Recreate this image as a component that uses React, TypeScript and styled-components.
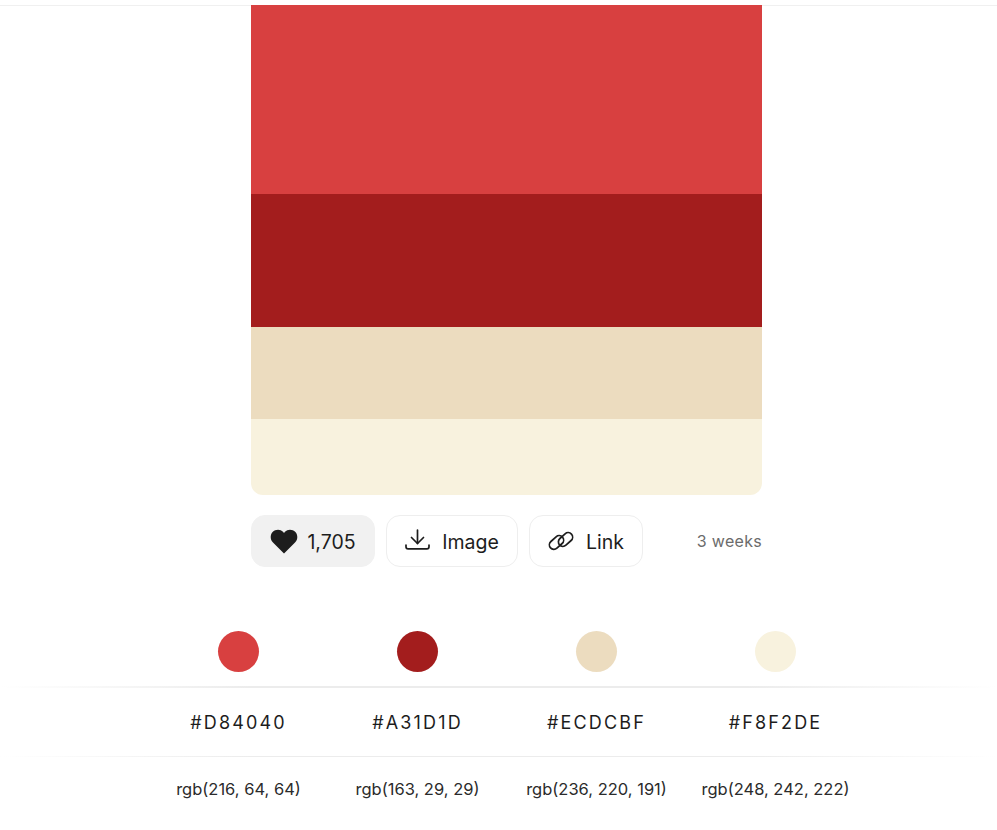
import styled, { createGlobalStyle } from 'styled-components';

const GlobalStyle = createGlobalStyle`
  html, body {
    margin: 0;
    padding: 0;
    background: #fff;
    font-family: Inter, "Liberation Sans", sans-serif;
    color: #1d1d1d;
  }
`;

const colors = [
  { hex: '#D84040', rgb: 'rgb(216, 64, 64)', height: 189 },
  { hex: '#A31D1D', rgb: 'rgb(163, 29, 29)', height: 133 },
  { hex: '#ECDCBF', rgb: 'rgb(236, 220, 191)', height: 92 },
  { hex: '#F8F2DE', rgb: 'rgb(248, 242, 222)', height: 76 },
];

const Page = styled.div`
  width: 997px;
  height: 830px;
  overflow: hidden;
  padding-top: 5px;
  box-sizing: border-box;
`;

const TopRule = styled.div`
  height: 1px;
  margin-bottom: -1px;
  background: #f0f0f0;
`;

const Main = styled.main`
  width: 511px;
  margin-left: 251px;
`;

const Palette = styled.div`
  display: flex;
  flex-direction: column;
  border-radius: 0 0 12px 12px;
  overflow: hidden;
`;

const Swatch = styled.div<{ $color: string; $height: number }>`
  height: ${(p) => p.$height}px;
  background: ${(p) => p.$color};
`;

const Actions = styled.div`
  display: flex;
  align-items: center;
  gap: 11px;
  margin-top: 20px;
`;

const ActionButton = styled.button<{ $liked?: boolean; $width: number }>`
  display: flex;
  align-items: center;
  justify-content: center;
  gap: ${(p) => (p.$liked ? 9 : 12)}px;
  width: ${(p) => p.$width}px;
  height: 52px;
  padding: 0;
  box-sizing: border-box;
  border: 1px solid ${(p) => (p.$liked ? '#f1f1f1' : '#eeeeee')};
  border-radius: 14px;
  background: ${(p) => (p.$liked ? '#f1f1f1' : '#fff')};
  color: #1d1d1d;
  font-family: inherit;
  font-size: 19.5px;
  line-height: 24px;
`;

const Label = styled.span`
  padding-top: 1px;
`;

const Age = styled.span`
  margin-left: auto;
  font-size: 16px;
  letter-spacing: 0.3px;
  color: #6b6b6b;
`;

const Table = styled.section`
  margin-top: 64px;
`;

const Row = styled.div<{ $height: number; $rule?: number; $paddingBottom?: number }>`
  display: grid;
  grid-template-columns: repeat(4, 179px);
  align-items: center;
  justify-items: center;
  height: ${(p) => p.$height}px;
  box-sizing: border-box;
  padding-left: 149px;
  padding-bottom: ${(p) => p.$paddingBottom ?? 0}px;
  position: relative;

  ${(p) =>
    p.$rule
      ? `&::after {
    content: '';
    position: absolute;
    left: 0;
    right: 0;
    bottom: 0;
    height: ${p.$rule}px;
    background: linear-gradient(90deg, #fff 0%, #ececec 25%, #ececec 75%, #fff 100%);
  }`
      : ''}
`;

const Dot = styled.div<{ $color: string }>`
  width: 41px;
  height: 41px;
  border-radius: 50%;
  background: ${(p) => p.$color};
`;

const Hex = styled.span`
  font-size: 18px;
  letter-spacing: 2.16px;
  color: #1d1d1d;
`;

const Rgb = styled.span`
  font-size: 16.5px;
  color: #2b2b2b;
`;

const HeartIcon = () => (
  <svg width="28" height="25" viewBox="0 0 28 25" fill="#1d1d1d" aria-hidden="true">
    <path d="M14 24.5 3 13.6C-.2 10.4.2 5.6 2.6 3 5.4 0 10.4-.1 13 2.8l1 1.2 1-1.2C17.6-.1 22.6 0 25.4 3c2.4 2.6 2.8 7.4-.4 10.6L14 24.5Z" />
  </svg>
);

const DownloadIcon = () => (
  <svg width="25" height="24" viewBox="0 0 25 24" fill="none" stroke="#1d1d1d" strokeWidth="1.7" strokeLinecap="round" strokeLinejoin="round" aria-hidden="true">
    <path d="M12.5 1v13.5" />
    <path d="M6.5 8.5l6 6 6-6" />
    <path d="M1 16v1.7c0 1.2.9 2.1 2.1 2.1h18.8c1.2 0 2.1-.9 2.1-2.1V16" />
  </svg>
);

const LinkIcon = () => (
  <svg width="26" height="22" viewBox="0 0 26 22" fill="none" stroke="#1d1d1d" strokeWidth="1.7" aria-hidden="true">
    <rect x="0.5" y="8" width="16" height="9" rx="4.5" transform="rotate(-42 8.5 12.5)" />
    <rect x="9.5" y="5" width="16" height="9" rx="4.5" transform="rotate(-42 17.5 9.5)" />
  </svg>
);

export default function App() {
  return (
    <Page>
      <GlobalStyle />
      <TopRule />
      <Main>
        <Palette>
          {colors.map((c) => (
            <Swatch key={c.hex} $color={c.hex} $height={c.height} />
          ))}
        </Palette>
        <Actions>
          <ActionButton $liked $width={124}>
            <HeartIcon />
            <Label>1,705</Label>
          </ActionButton>
          <ActionButton $width={132}>
            <DownloadIcon />
            <Label>Image</Label>
          </ActionButton>
          <ActionButton $width={114}>
            <LinkIcon />
            <Label>Link</Label>
          </ActionButton>
          <Age>3 weeks</Age>
        </Actions>
      </Main>
      <Table>
        <Row $height={57} $rule={2} $paddingBottom={16}>
          {colors.map((c) => (
            <Dot key={c.hex} $color={c.hex} />
          ))}
        </Row>
        <Row $height={69} $rule={1}>
          {colors.map((c) => (
            <Hex key={c.hex}>{c.hex}</Hex>
          ))}
        </Row>
        <Row $height={63}>
          {colors.map((c) => (
            <Rgb key={c.hex}>{c.rgb}</Rgb>
          ))}
        </Row>
      </Table>
    </Page>
  );
}
